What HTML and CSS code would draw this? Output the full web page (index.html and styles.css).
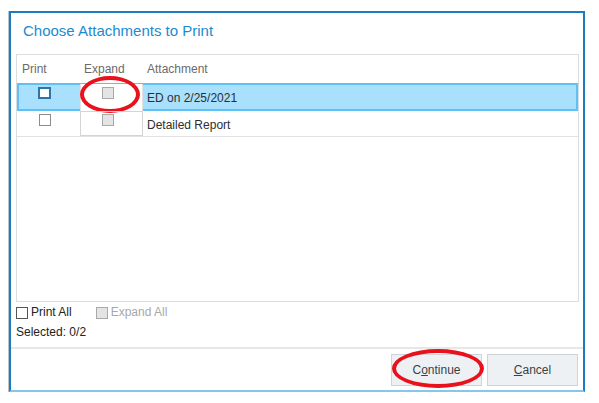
FILE: index.html
```html
<!DOCTYPE html>
<html>
<head>
<meta charset="utf-8">
<link rel="stylesheet" href="styles.css">
</head>
<body>
<div class="dialog">
  <div class="title">Choose Attachments to Print</div>
  <div class="panel">
    <div class="row head">
      <div class="cell c-print">Print</div>
      <div class="cell c-expand">Expand</div>
      <div class="cell c-name">Attachment</div>
    </div>
    <div class="row item selected">
      <div class="cell c-print"><span class="cb cb-focus"></span></div>
      <div class="cell c-expand box"><span class="cb cb-off"></span><span class="ring ring-expand"></span></div>
      <div class="cell c-name">ED on 2/25/2021</div>
    </div>
    <div class="row item second">
      <div class="cell c-print"><span class="cb"></span></div>
      <div class="cell c-expand box boxed"><span class="cb cb-off"></span></div>
      <div class="cell c-name">Detailed Report</div>
    </div>
  </div>
  <div class="options">
    <label class="opt"><span class="cb cb-dark"></span>Print All</label>
    <label class="opt disabled"><span class="cb cb-off"></span>Expand All</label>
  </div>
  <div class="selected-count">Selected: 0/2</div>
  <div class="separator"></div>
  <div class="footer">
    <button class="btn">C<u>o</u>ntinue<span class="ring ring-btn"></span></button>
    <button class="btn"><u>C</u>ancel</button>
  </div>
</div>
</body>
</html>
```

FILE: styles.css
```css
* { box-sizing: border-box; }
html, body { margin: 0; padding: 0; background: #ffffff; }
body {
  font-family: "Liberation Sans", Arial, sans-serif;
  font-size: 12px;
  color: #333333;
  width: 599px;
  height: 403px;
  overflow: hidden;
}
.dialog {
  margin: 11px 0 0 9px;
  width: 576px;
  height: 381px;
  border: 2px solid #1b7cc0;
  border-bottom-color: #86c6e8;
  box-shadow: -1px 0 0 #b9c3cc;
  display: flex;
  flex-direction: column;
  background: #ffffff;
}
.title {
  height: 41px;
  line-height: 36px;
  padding-left: 12px;
  font-size: 15px;
  color: #1b8bcf;
}
.panel {
  height: 248px;
  margin: 0 4px 0 5px;
  border: 1px solid #dcdcdc;
}
.row {
  display: grid;
  grid-template-columns: 63px 63px 1fr;
}
.head {
  height: 28px;
  align-items: center;
  color: #6b6b6b;
}
.head .c-print { padding-left: 5px; }
.head .c-expand { padding-left: 4px; }
.head .c-name { padding-left: 4px; }
.cell { position: relative; }
.item { height: 28px; }
.item .c-print, .item .c-expand { padding-left: 22px; padding-top: 4px; }
.item .c-name { display: flex; align-items: center; padding-left: 4px; padding-top: 1px; color: #2e2e2e; }
.selected {
  background: #a8e0fe;
  box-shadow: inset 0 0 0 2px #5ec1f5;
}
.selected .box {
  margin-top: 1px;
  background: #ffffff;
  border-left: 1px solid #e2e2e2;
  border-right: 1px solid #e2e2e2;
  padding-left: 21px;
  padding-top: 3px;
}
.second {
  height: 26px;
  border-bottom: 1px solid #e2e2e2;
}
.second .c-print { padding-top: 3px; }
.second .c-name { padding-top: 3px; }
.second .boxed {
  border: 1px solid #d4d4d4;
  padding-left: 21px;
  padding-top: 2px;
}
.cb {
  display: inline-block;
  width: 12px;
  height: 12px;
  border: 1px solid #8c8c8c;
  background: #ffffff;
  vertical-align: top;
}
.cb-focus { border: 2px solid #2b74ad; width: 13px; height: 12px; margin-left: -1px; }
.cb-off { background: #e4e4e4; border-color: #a9a9a9; }
.cb-dark { border-color: #555555; }
.options {
  display: flex;
  margin-top: 4px;
  padding-left: 5px;
  height: 13px;
  line-height: 13px;
  font-size: 12px;
}
.opt { display: flex; align-items: center; gap: 3px; color: #222222; }
.opt + .opt { margin-left: 24px; }
.opt.disabled { color: #a8a8a8; }
.opt .cb { width: 12px; height: 12px; }
.selected-count {
  margin-top: 6px;
  padding-left: 5px;
  line-height: 14px;
  color: #222222;
}
.separator {
  margin-top: 8px;
  height: 2px;
  background: #e7e7e7;
}
.footer {
  display: flex;
  justify-content: flex-end;
  gap: 5px;
  padding: 5px 5px 4px 0;
}
.btn {
  position: relative;
  width: 91px;
  height: 32px;
  border: 1px solid #cfd4d9;
  background: #eef1f4;
  font-family: "Liberation Sans", Arial, sans-serif;
  font-size: 12px;
  color: #3a3f44;
  padding: 0;
  margin: 0;
}
.ring {
  position: absolute;
  border: 4px solid #e8121c;
  border-radius: 50%;
  pointer-events: none;
}
.ring-expand {
  left: -1px;
  top: -8px;
  width: 60px;
  height: 37px;
}
.ring-btn {
  left: 0;
  top: -6px;
  width: 92px;
  height: 39px;
}
```
